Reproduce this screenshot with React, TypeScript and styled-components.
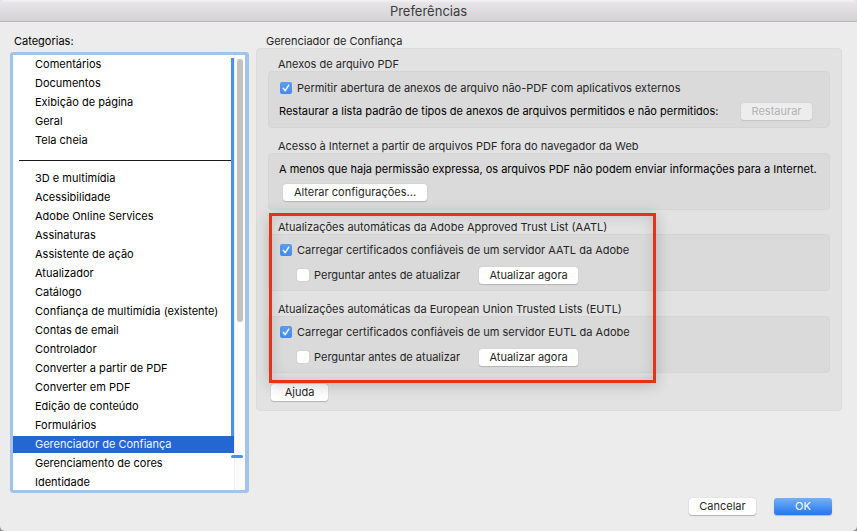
import React, { useState } from "react";
import styled, { createGlobalStyle, css } from "styled-components";

const GlobalStyle = createGlobalStyle`
  *, *::before, *::after { box-sizing: border-box; }
  body {
    margin: 0;
    background: linear-gradient(#dfe7ee 50%, #8f8f8f 50%);
    font-family: Inter, "Liberation Sans", sans-serif;
    font-size: 11px;
    line-height: 14px;
    color: #262626;
  }
  button, input { font: inherit; margin: 0; }
`;

const Window = styled.div`
  display: flex;
  flex-direction: column;
  height: 100vh;
  overflow: hidden;
  border-radius: 5px;
  background: #ececec;
`;

const TitleBar = styled.header`
  display: flex;
  flex: none;
  align-items: flex-end;
  justify-content: center;
  height: 22px;
  border-bottom: 1px solid #b9b7b9;
  background: linear-gradient(#f4f2f4 0, #e6e4e6 3px, #d3d1d3 100%);
`;

const Title = styled.h1`
  margin: 0;
  font-size: 13px;
  line-height: 20px;
  font-weight: 400;
  color: #3c3c3c;
`;

const Body = styled.div`
  display: flex;
  flex: 1;
  min-height: 0;
  gap: 7px;
  padding: 12px 15px 0 10px;
`;

const Sidebar = styled.nav`
  display: flex;
  flex: none;
  flex-direction: column;
  width: 239px;
  padding-bottom: 38px;
`;

const SidebarLabel = styled.h2`
  margin: 0 0 4px;
  padding-left: 4px;
  font-size: 11px;
  line-height: 14px;
  font-weight: 400;
  color: #000;
`;

const ListFrame = styled.div`
  display: flex;
  flex: 1;
  min-height: 0;
  overflow: hidden;
  border: 3px solid #a2c3ec;
  border-right-width: 4px;
  border-radius: 3px;
  background: #fff;
`;

const List = styled.ul`
  flex: 1;
  margin: 0;
  padding: 0;
  list-style: none;
`;

const Category = styled.button<{ $selected: boolean }>`
  display: block;
  width: 100%;
  height: 19px;
  padding: 0 0 0 22px;
  border: solid transparent;
  border-width: 1px 0;
  background: ${(p) => (p.$selected ? "#2467d3" : "transparent")};
  background-clip: padding-box;
  color: ${(p) => (p.$selected ? "#f1f6ff" : "#000")};
  line-height: 17px;
  text-align: left;
  white-space: nowrap;
`;

const Separator = styled.li`
  height: 1px;
  margin: 10px 0 8px 6px;
  background: #1a1a1a;
`;

const Gutter = styled.div`
  position: relative;
  flex: none;
  width: 14px;
  margin-left: -3px;
  padding: 4px 2px 0 6px;
  background: linear-gradient(90deg, transparent 3px, #ececec 3px, #ececec 4px, #fbfbfb 4px);
`;

const Thumb = styled.div`
  height: 263px;
  border-radius: 3px;
  background: #c1c1c1;
`;

const GuideLine = styled.div`
  position: absolute;
  top: 3px;
  left: 0;
  width: 3px;
  height: 378px;
  background: #508ee8;
`;

const GuideFoot = styled.div`
  position: absolute;
  top: 400px;
  left: 0;
  width: 12px;
  height: 3px;
  border-radius: 2px;
  background: #508ee8;
`;

const Main = styled.main`
  display: flex;
  flex: 1;
  min-width: 0;
  flex-direction: column;
`;

const PaneTitle = styled.h2`
  margin: 0;
  padding-left: 10px;
  font-size: 11px;
  line-height: 14px;
  font-weight: 400;
`;

const Pane = styled.section`
  padding: 8px 11px;
  border: 1px solid #dcdcdc;
  border-radius: 4px;
  background: #e2e2e2;
`;

const Group = styled.fieldset`
  min-width: 0;
  margin: 0 0 11px;
  padding: 0;
  border: 0;
`;

const GroupTitle = styled.legend`
  padding: 0 0 0 10px;
  line-height: 14px;
`;

const GroupBox = styled.div<{ $tight?: boolean }>`
  display: flex;
  flex-direction: column;
  height: 57px;
  border: 1px solid #d5d5d5;
  border-radius: 4px;
  background: #dadada;
  padding: ${(p) => (p.$tight ? 6 : 7)}px 10px 0;
`;

const Row = styled.div<{ $indent?: boolean; $gap?: number }>`
  display: flex;
  flex: none;
  align-items: center;
  gap: ${(p) => p.$gap ?? 0}px;
  padding-left: ${(p) => (p.$indent ? 17 : 0)}px;
  min-height: 18px;
  white-space: nowrap;
`;

const Statement = styled.p`
  margin: 0;
  color: #000;
`;

const Button = styled.button<{ $width: number; $primary?: boolean }>`
  flex: none;
  width: ${(p) => p.$width}px;
  height: 17px;
  padding: 0;
  border: 0;
  border-radius: 3px;
  background: #fff;
  box-shadow: 0 0 1px #aaa, 0 1px 1px #b4b4b4;
  color: #262626;
  line-height: 17px;
  text-align: center;
  white-space: nowrap;
  ${(p) =>
    p.$primary &&
    css`
      background: linear-gradient(#72b0f8, #2677ee);
      box-shadow: 0 1px 1px #a9bddb;
      color: #fff;
    `}
  &:disabled {
    background: #ededed;
    box-shadow: 0 0 1px #bbb, 0 1px 1px #c6c6c6;
    color: #b3b3b3;
  }
`;

const CheckLabel = styled.label`
  display: flex;
  align-items: center;
  gap: 5px;
  padding-left: 1px;
`;

const CheckFrame = styled.span`
  display: grid;
  width: 12px;
  height: 12px;
  > * { grid-area: 1 / 1; }
  > svg { pointer-events: none; }
`;

const CheckInput = styled.input`
  appearance: none;
  width: 12px;
  height: 12px;
  border-radius: 2px;
  background: #fff;
  box-shadow: 0 0 1px #999;
  &:checked {
    background: linear-gradient(#5b9cf0, #448bee);
    box-shadow: none;
  }
`;

const Highlighted = styled.div`
  position: relative;
  margin-top: -1px;
`;

const Callout = styled.div`
  position: absolute;
  top: -7px;
  left: 1px;
  width: 387px;
  height: 170px;
  border: 3px solid #e63312;
  box-shadow: 0 2px 14px rgba(0, 0, 0, 0.2), inset 0 0 14px rgba(0, 0, 0, 0.14);
  pointer-events: none;
`;

const PaneActions = styled.div`
  padding-left: 3px;
  padding-bottom: 1px;
`;

const Footer = styled.footer`
  display: flex;
  justify-content: flex-end;
  gap: 18px;
  margin-top: auto;
  padding: 0 10px 16px 0;
`;

const UpdateRow = styled(Row)`
  margin-top: 7px;
`;

const RestoreRow = styled(Row)`
  justify-content: space-between;
  margin-top: 5px;
  padding-right: 7px;
`;

const SettingsRow = styled(Row)`
  margin-top: 5px;
  padding-left: 4px;
`;

function Checkbox({ label, initial = false }: { label: string; initial?: boolean }) {
  const [checked, setChecked] = useState(initial);
  return (
    <CheckLabel>
      <CheckFrame>
        <CheckInput type="checkbox" checked={checked} onChange={() => setChecked(!checked)} />
        {checked && (
          <svg width="12" height="12" viewBox="0 0 12 12" fill="none" aria-hidden="true">
            <path d="M3.2 6.3 5.2 8.7 8.8 3.1" stroke="#fff" strokeWidth="1.4" strokeLinecap="round" strokeLinejoin="round" />
          </svg>
        )}
      </CheckFrame>
      {label}
    </CheckLabel>
  );
}

function TrustList({ title, server }: { title: string; server: string }) {
  return (
    <Group>
      <GroupTitle>{title}</GroupTitle>
      <GroupBox $tight>
        <Row>
          <Checkbox label={`Carregar certificados confiáveis de um servidor ${server} da Adobe`} initial />
        </Row>
        <UpdateRow $indent $gap={19}>
          <Checkbox label="Perguntar antes de atualizar" />
          <Button type="button" $width={99}>Atualizar agora</Button>
        </UpdateRow>
      </GroupBox>
    </Group>
  );
}

const general = ["Comentários", "Documentos", "Exibição de página", "Geral", "Tela cheia"];
const features = [
  "3D e multimídia",
  "Acessibilidade",
  "Adobe Online Services",
  "Assinaturas",
  "Assistente de ação",
  "Atualizador",
  "Catálogo",
  "Confiança de multimídia (existente)",
  "Contas de email",
  "Controlador",
  "Converter a partir de PDF",
  "Converter em PDF",
  "Edição de conteúdo",
  "Formulários",
  "Gerenciador de Confiança",
  "Gerenciamento de cores",
  "Identidade",
];

export default function App() {
  const [selected, setSelected] = useState("Gerenciador de Confiança");
  const renderCategory = (name: string) => (
    <li key={name}>
      <Category
        type="button"
        $selected={name === selected}
        aria-current={name === selected}
        onClick={() => setSelected(name)}
      >
        {name}
      </Category>
    </li>
  );

  return (
    <>
      <GlobalStyle />
      <Window>
        <TitleBar>
          <Title>Preferências</Title>
        </TitleBar>
        <Body>
          <Sidebar aria-labelledby="categories">
            <SidebarLabel id="categories">Categorias:</SidebarLabel>
            <ListFrame>
              <List>
                {general.map(renderCategory)}
                <Separator role="separator" />
                {features.map(renderCategory)}
              </List>
              <Gutter>
                <Thumb />
                <GuideLine />
                <GuideFoot />
              </Gutter>
            </ListFrame>
          </Sidebar>
          <Main>
            <PaneTitle>Gerenciador de Confiança</PaneTitle>
            <Pane>
              <Group>
                <GroupTitle>Anexos de arquivo PDF</GroupTitle>
                <GroupBox>
                  <Row>
                    <Checkbox
                      label="Permitir abertura de anexos de arquivo não-PDF com aplicativos externos"
                      initial
                    />
                  </Row>
                  <RestoreRow>
                    <Statement>
                      Restaurar a lista padrão de tipos de anexos de arquivos permitidos e não permitidos:
                    </Statement>
                    <Button type="button" $width={71} disabled>Restaurar</Button>
                  </RestoreRow>
                </GroupBox>
              </Group>
              <Group>
                <GroupTitle>Acesso à Internet a partir de arquivos PDF fora do navegador da Web</GroupTitle>
                <GroupBox $tight>
                  <Row>
                    <Statement>
                      A menos que haja permissão expressa, os arquivos PDF não podem enviar informações para a Internet.
                    </Statement>
                  </Row>
                  <SettingsRow>
                    <Button type="button" $width={144}>Alterar configurações...</Button>
                  </SettingsRow>
                </GroupBox>
              </Group>
              <Highlighted>
                <TrustList title="Atualizações automáticas da Adobe Approved Trust List (AATL)" server="AATL" />
                <TrustList title="Atualizações automáticas da European Union Trusted Lists (EUTL)" server="EUTL" />
                <Callout />
              </Highlighted>
              <PaneActions>
                <Button type="button" $width={57}>Ajuda</Button>
              </PaneActions>
            </Pane>
            <Footer>
              <Button type="button" $width={67}>Cancelar</Button>
              <Button type="button" $width={58} $primary>OK</Button>
            </Footer>
          </Main>
        </Body>
      </Window>
    </>
  );
}
